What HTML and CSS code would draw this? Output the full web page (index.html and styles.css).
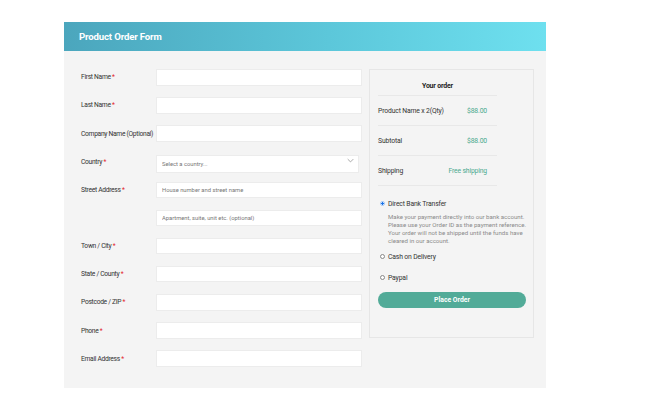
FILE: index.html
```html
<!DOCTYPE html>
<html lang="en">
<head>
    <meta charset="UTF-8">
    <meta name="viewport" content="width=device-width, initial-scale=1.0">
    <title>Product Order Form</title>
    <link rel="stylesheet" href="styles.css">
</head>
<body>

    <div class="order-card">
        <!-- header bar -->
        <div class="card-head">
            <h1>Product Order Form</h1>
        </div>

        <div class="card-body">
            <!-- billing fields -->
            <form class="billing">
                <div class="field">
                    <label>First Name <span class="req">*</span></label>
                    <input type="text">
                </div>
                <div class="field">
                    <label>Last Name <span class="req">*</span></label>
                    <input type="text">
                </div>
                <div class="field">
                    <label>Company Name (Optional)</label>
                    <input type="text">
                </div>
                <div class="field">
                    <label>Country <span class="req">*</span></label>
                    <div class="select-wrap">
                        <select>
                            <option>Select a country...</option>
                        </select>
                        <svg class="chevron" viewBox="0 0 10 6" width="7" height="5">
                            <path d="M1 1l4 4 4-4" fill="none" stroke="#999" stroke-width="1.2"/>
                        </svg>
                    </div>
                </div>
                <div class="field">
                    <label>Street Address <span class="req">*</span></label>
                    <input type="text" placeholder="House number and street name">
                </div>
                <div class="field">
                    <label></label>
                    <input type="text" placeholder="Apartment, suite, unit etc. (optional)">
                </div>
                <div class="field">
                    <label>Town / City <span class="req">*</span></label>
                    <input type="text">
                </div>
                <div class="field">
                    <label>State / County <span class="req">*</span></label>
                    <input type="text">
                </div>
                <div class="field">
                    <label>Postcode / ZIP <span class="req">*</span></label>
                    <input type="text">
                </div>
                <div class="field">
                    <label>Phone <span class="req">*</span></label>
                    <input type="text">
                </div>
                <div class="field">
                    <label>Email Address <span class="req">*</span></label>
                    <input type="text">
                </div>
            </form>

            <!-- order summary -->
            <div class="summary">
                <table class="order-table">
                    <tr>
                        <th colspan="2">Your order</th>
                    </tr>
                    <tr>
                        <td>Product Name x 2(Qty)</td>
                        <td class="val">$88.00</td>
                    </tr>
                    <tr>
                        <td>Subtotal</td>
                        <td class="val">$88.00</td>
                    </tr>
                    <tr>
                        <td>Shipping</td>
                        <td class="val">Free shipping</td>
                    </tr>
                </table>

                <div class="payments">
                    <label class="pay-option">
                        <input type="radio" name="pay" checked> Direct Bank Transfer
                    </label>
                    <p class="pay-note">Make your payment directly into our bank account. Please use your Order ID as the payment reference. Your order will not be shipped until the funds have cleared in our account.</p>
                    <label class="pay-option">
                        <input type="radio" name="pay"> Cash on Delivery
                    </label>
                    <label class="pay-option">
                        <input type="radio" name="pay"> Paypal
                    </label>
                </div>

                <button class="place-btn" type="button">Place Order</button>
            </div>
        </div>
    </div>

</body>
</html>
```

FILE: styles.css
```css
/* base */
body {
    margin: 0;
    background: #fff;
    font-family: Roboto, "Liberation Sans", sans-serif;
    color: #333;
}

.order-card {
    width: 482px;
    margin: 22px 0 0 64px;
    background: #f4f4f4;
}

/* header */
.card-head {
    height: 29px;
    display: flex;
    align-items: center;
    padding-left: 15px;
    background: linear-gradient(90deg, #4ba6bd 0%, #5cc7da 55%, #6ee0ef 100%);
}

.card-head h1 {
    margin: 0;
    font-size: 9.6px;
    font-weight: 700;
    color: #fff;
    letter-spacing: -0.15px;
}

.card-body {
    display: flex;
    align-items: flex-start;
    gap: 7px;
    padding: 18px 10px 21px 17px;
}

/* billing form */
.billing {
    display: flex;
    flex-direction: column;
    gap: 11.65px;
}

.field {
    display: flex;
    align-items: center;
    height: 16.5px;
}

.field label {
    width: 75px;
    flex-shrink: 0;
    font-size: 6.7px;
    color: #333;
    letter-spacing: -0.3px;
    white-space: nowrap;
}

.req {
    color: #e3242b;
}

.field input,
.field select {
    box-sizing: border-box;
    width: 206px;
    height: 16.5px;
    margin: 0;
    padding: 0 5px;
    border: 1px solid #ececec;
    background: #fff;
    font-family: inherit;
    font-size: 5.8px;
    color: #777;
    outline: none;
}

.field input::placeholder {
    color: #777;
}

.select-wrap {
    position: relative;
}

.field select {
    appearance: none;
    -webkit-appearance: none;
    width: 203px;
    height: 18px;
}

.chevron {
    position: absolute;
    right: 5px;
    top: 7px;
}

/* summary panel */
.summary {
    box-sizing: border-box;
    width: 165px;
    height: 269px;
    border: 1px solid #e6e6e6;
    padding: 0 8px;
}

.order-table {
    width: 119px;
    border-collapse: collapse;
    font-size: 6.8px;
    letter-spacing: -0.15px;
}

.order-table th {
    height: 19px;
    padding: 6px 0 0;
    font-weight: 700;
    font-size: 6.9px;
    color: #222;
    border-bottom: 1px solid #e8e8e8;
}

.order-table td {
    height: 29px;
    padding: 0;
    color: #333;
    border-bottom: 1px solid #e8e8e8;
    white-space: nowrap;
}

.order-table td.val {
    text-align: right;
    padding-right: 10px;
    color: #4aa98f;
}

/* payment methods */
.payments {
    margin-top: 13px;
}

.pay-option {
    display: flex;
    align-items: center;
    gap: 3px;
    font-size: 6.8px;
    color: #333;
    letter-spacing: -0.15px;
    height: 9px;
}

.pay-option input {
    appearance: none;
    -webkit-appearance: none;
    width: 5px;
    height: 5px;
    margin: 0 0 0 2px;
    border: 0.7px solid #888;
    border-radius: 50%;
    background: #fff;
}

.pay-option input:checked {
    border-color: #9cc3f5;
    background: radial-gradient(circle, #1a73e8 55%, #fff 62%);
}

.pay-note {
    margin: 5px -4px 7px 10px;
    font-size: 6.1px;
    line-height: 8px;
    color: #8a8a8a;
}

.pay-option + .pay-option {
    margin-top: 12px;
}

.place-btn {
    display: block;
    width: 148px;
    height: 16px;
    margin-top: 10px;
    border: none;
    border-radius: 8px;
    background: #52ab98;
    color: #fff;
    font-family: inherit;
    font-size: 6.8px;
    font-weight: 700;
}
```
